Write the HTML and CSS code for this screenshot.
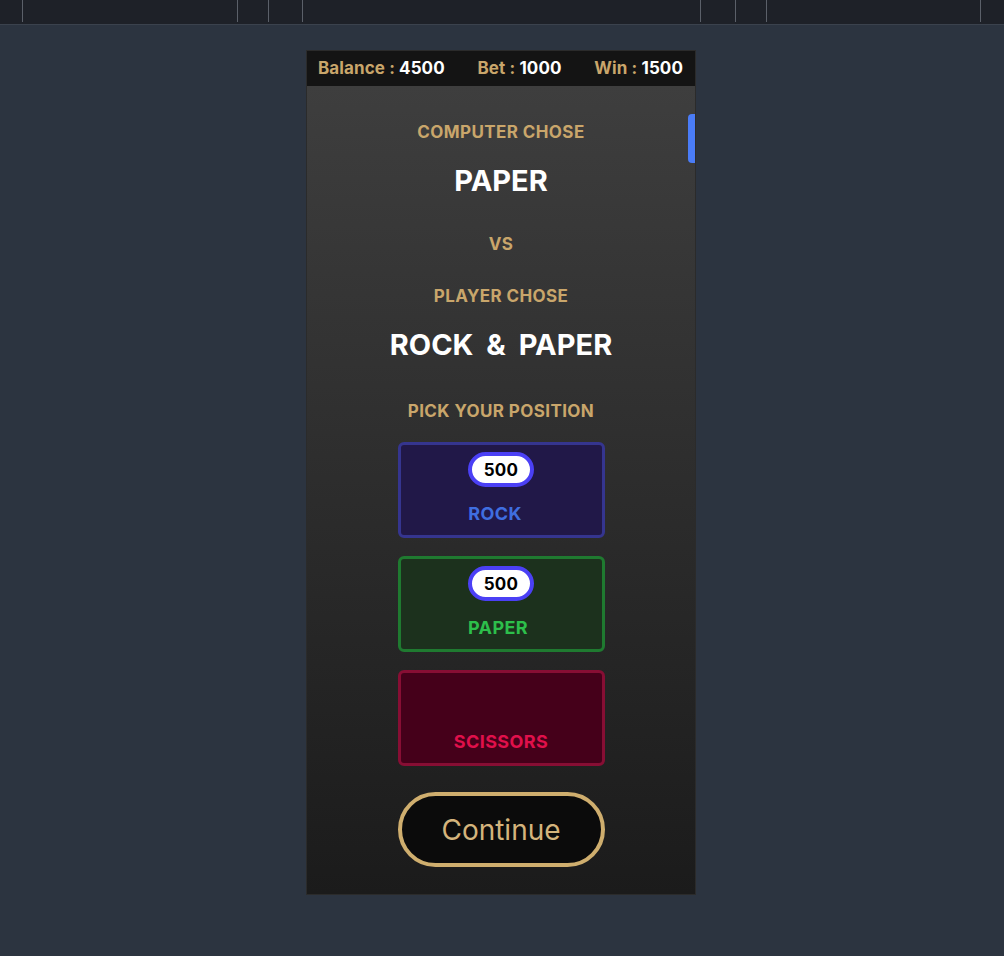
FILE: index.html
```html
<!DOCTYPE html>
<html lang="en">
<head>
    <meta charset="UTF-8">
    <meta name="viewport" content="width=device-width, initial-scale=1.0">
    <title>Rock Paper Scissors</title>
    <link rel="stylesheet" href="styles.css">
</head>
<body>
    <div class="toolbar">
        <span class="tick" style="left: 22px"></span>
        <span class="tick" style="left: 237px"></span>
        <span class="tick" style="left: 268px"></span>
        <span class="tick" style="left: 302px"></span>
        <span class="tick" style="left: 700px"></span>
        <span class="tick" style="left: 735px"></span>
        <span class="tick" style="left: 766px"></span>
        <span class="tick" style="left: 980px"></span>
    </div>

    <div class="game-card">
        <div class="stats-bar">
            <div class="stat">Balance : <span class="stat-value">4500</span></div>
            <div class="stat">Bet : <span class="stat-value">1000</span></div>
            <div class="stat">Win : <span class="stat-value">1500</span></div>
        </div>

        <div class="game-body">
            <div class="scroll-thumb"></div>

            <div class="label computer-label">COMPUTER CHOSE</div>
            <div class="choice computer-choice">PAPER</div>

            <div class="label vs-label">VS</div>

            <div class="label player-label">PLAYER CHOSE</div>
            <div class="choice player-choice">ROCK <span class="amp">&amp;</span> PAPER</div>

            <div class="label pick-label">PICK YOUR POSITION</div>

            <div class="positions">
                <div class="position rock">
                    <div class="chip">500</div>
                    <div class="position-name">ROCK</div>
                </div>
                <div class="position paper">
                    <div class="chip">500</div>
                    <div class="position-name">PAPER</div>
                </div>
                <div class="position scissors">
                    <div class="position-name">SCISSORS</div>
                </div>
            </div>

            <button type="button" class="continue-button">Continue</button>
        </div>
    </div>
</body>
</html>
```

FILE: styles.css
```css
body {
    margin: 0;
    padding: 0;
    background: #2c3440;
    font-family: 'Inter', 'Liberation Sans', sans-serif;
}

.toolbar {
    position: relative;
    height: 24px;
    background: #1e2128;
    border-bottom: 1px solid #3b424d;
}

.tick {
    position: absolute;
    top: 0;
    width: 1px;
    height: 22px;
    background: #5b6069;
}

.game-card {
    width: 390px;
    margin: 25px auto 0;
    box-sizing: border-box;
    border: 1px solid #2b2b2b;
    position: relative;
    left: -1px;
}

.stats-bar {
    height: 35px;
    background: #141414;
    display: flex;
    justify-content: space-between;
    align-items: center;
    padding: 0 12px 0 11px;
}

.stat {
    color: #c9a66b;
    font-size: 17px;
    font-weight: 700;
    letter-spacing: 0.1px;
    line-height: 20px;
    margin-top: -2px;
}

.stat-value {
    color: #ffffff;
}

.game-body {
    position: relative;
    background: linear-gradient(180deg, #3e3e3e 0%, #1b1b1b 100%);
    display: flex;
    flex-direction: column;
    align-items: center;
    padding: 36px 0 27px;
}

.scroll-thumb {
    position: absolute;
    right: 0;
    top: 28px;
    width: 7px;
    height: 49px;
    background: #4a7cf7;
    border-radius: 4px 0 0 4px;
}

.label {
    color: #c9a66b;
    font-size: 17px;
    font-weight: 700;
    letter-spacing: 0.4px;
    line-height: 20px;
}

.choice {
    color: #ffffff;
    font-size: 29px;
    font-weight: 700;
    line-height: 32px;
}

.computer-choice {
    margin-top: 23px;
}

.vs-label {
    margin-top: 37px;
}

.player-label {
    margin-top: 32px;
}

.player-choice {
    margin-top: 23px;
}

.amp {
    margin: 0 6px;
}

.pick-label {
    margin-top: 40px;
}

.positions {
    margin-top: 21px;
    display: flex;
    flex-direction: column;
    gap: 18px;
}

.position {
    width: 207px;
    height: 96px;
    box-sizing: border-box;
    border: 3px solid;
    border-radius: 6px;
    display: flex;
    flex-direction: column;
    justify-content: flex-end;
    align-items: center;
    padding-bottom: 11px;
}

.chip {
    width: 66px;
    height: 35px;
    box-sizing: border-box;
    border: 4px solid #4b40f5;
    border-radius: 18px;
    background: #ffffff;
    color: #000000;
    font-size: 17px;
    font-weight: 700;
    letter-spacing: 0.3px;
    display: flex;
    align-items: center;
    justify-content: center;
    margin-bottom: 17px;
}

.position-name {
    font-size: 18px;
    font-weight: 700;
    letter-spacing: 0.4px;
    line-height: 20px;
}

.rock {
    background: #211848;
    border-color: #35358f;
}

.rock .position-name {
    color: #3f6ee0;
    margin-right: 12px;
}

.paper {
    background: #1c311d;
    border-color: #1f7a30;
}

.paper .position-name {
    color: #2dbf4b;
    margin-right: 6px;
}

.scissors {
    background: #45001a;
    border-color: #870e34;
}

.scissors .position-name {
    color: #e0104b;
}

.continue-button {
    margin-top: 26px;
    width: 207px;
    height: 75px;
    box-sizing: border-box;
    border: 4px solid #cfae6e;
    border-radius: 38px;
    background: #0b0b0b;
    color: #d4b47c;
    font-family: 'Inter', 'Liberation Sans', sans-serif;
    font-size: 28px;
    font-weight: 400;
    cursor: pointer;
}
```
